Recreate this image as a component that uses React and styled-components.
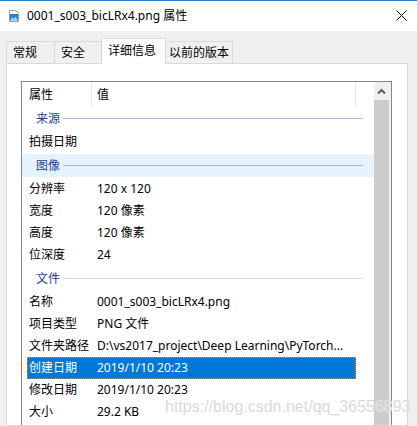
import React from "react";
import styled, { createGlobalStyle } from "styled-components";

const Global = createGlobalStyle`
  html, body { margin: 0; padding: 0; background: #f0f0f0; }
  body { font-family: "Noto Sans", "Noto Sans CJK SC", sans-serif; font-size: 12px; color: #000; }
`;

const Window = styled.div`
  position: relative;
  width: 417px;
  height: 426px;
  overflow: hidden;
  display: flex;
  flex-direction: column;
  background: #f0f0f0;
  font-family: "Noto Sans", "Noto Sans CJK SC", sans-serif;
  font-size: 12px;
  color: #000;
`;

const TitleBar = styled.div`
  box-sizing: border-box;
  height: 31px;
  flex-shrink: 0;
  border-top: 1px solid #1883d7;
  background: #fff;
  display: flex;
  align-items: center;
  padding: 0 10px 1px 9px;
`;

const TitleText = styled.span`
  margin-left: 8px;
  flex: 1;
  line-height: 16px;
  white-space: nowrap;
`;

const CloseBtn = styled.div`
  width: 11px;
  height: 11px;
  display: flex;
`;

const Body = styled.div`
  flex: 1;
  min-height: 0;
  display: flex;
  flex-direction: column;
  padding: 7px 9px 0 6px;
`;

const TabBar = styled.div`
  display: flex;
  align-items: flex-end;
  height: 26px;
  margin-bottom: -1px;
  position: relative;
  z-index: 1;
  flex-shrink: 0;
`;

const Tab = styled.div`
  box-sizing: border-box;
  width: ${(p) => p.$w}px;
  height: ${(p) => (p.$active ? 26 : 22)}px;
  margin-bottom: ${(p) => (p.$active ? 0 : 1)}px;
  margin-left: ${(p) => (p.$first ? 0 : -1)}px;
  border: 1px solid #d9d9d9;
  border-bottom: none;
  background: ${(p) => (p.$active ? "#fff" : "#f0f0f0")};
  padding-left: ${(p) => p.$pad}px;
  padding-top: ${(p) => (p.$active ? 4 : 3)}px;
  line-height: 16px;
  white-space: nowrap;
  position: relative;
  z-index: ${(p) => (p.$active ? 2 : 1)};
`;

const Panel = styled.div`
  flex: 1;
  min-height: 0;
  box-sizing: border-box;
  background: #fff;
  border: 1px solid #d9d9d9;
  padding: 17px 15px 0 14px;
  overflow: hidden;
`;

const ListBox = styled.div`
  display: flex;
  height: 380px;
  border: 1px solid #828790;
  background: #fff;
`;

const ListContent = styled.div`
  flex: 1;
  min-width: 0;
  display: flex;
  flex-direction: column;
`;

const ScrollTrack = styled.div`
  width: 17px;
  flex-shrink: 0;
  background: #f0f0f0;
  display: flex;
  flex-direction: column;
`;

const ScrollUp = styled.div`
  height: 17px;
  margin-top: 1px;
  margin-right: 2px;
  display: flex;
  align-items: center;
  justify-content: center;
  flex-shrink: 0;
`;

const Thumb = styled.div`
  flex: 1;
  background: #cdcdcd;
  margin-right: 2px;
`;

const HeaderRow = styled.div`
  display: flex;
  height: 24px;
  flex-shrink: 0;
`;

const HeadName = styled.div`
  box-sizing: border-box;
  width: 69px;
  padding-left: 7px;
  display: flex;
  align-items: center;
`;

const HeadValue = styled.div`
  box-sizing: border-box;
  width: 265px;
  border-left: 1px solid #e5e5e5;
  border-right: 1px solid #e5e5e5;
  padding-left: 5px;
  display: flex;
  align-items: center;
`;

const ItemRow = styled.div`
  box-sizing: border-box;
  display: flex;
  align-items: center;
  height: 22px;
  margin-left: 5px;
  width: 329px;
  flex-shrink: 0;
  background: ${(p) => (p.$sel ? "#0078d7" : "transparent")};
  color: ${(p) => (p.$sel ? "#fff" : "#000")};
  outline: ${(p) => (p.$sel ? "1px dotted #d98a3a" : "none")};
  outline-offset: -1px;
`;

const ItemName = styled.div`
  box-sizing: border-box;
  width: 64px;
  flex-shrink: 0;
  padding-left: 2px;
  white-space: nowrap;
  line-height: 16px;
`;

const ItemValue = styled.div`
  flex: 1;
  min-width: 0;
  padding: 0 6px;
  white-space: nowrap;
  overflow: hidden;
  text-overflow: ellipsis;
  line-height: 16px;
`;

const GroupRow = styled.div`
  height: 25px;
  box-sizing: border-box;
  padding: 1px 0;
  flex-shrink: 0;
  display: flex;
`;

const GroupInner = styled.div`
  flex: 1;
  display: flex;
  align-items: center;
  padding-left: 14px;
  background: ${(p) => (p.$hover ? "#e5f3ff" : "transparent")};
  color: #1e3f9e;
  line-height: 16px;
`;

const GroupLine = styled.div`
  flex: 1;
  height: 1px;
  margin: 0 11px 0 3px;
  background: ${(p) => p.$tone};
`;

const Watermark = styled.div`
  position: absolute;
  left: 165px;
  top: 399px;
  font-family: "Liberation Sans", Arial, sans-serif;
  font-size: 16px;
  line-height: 16px;
  color: #dadada;
  text-shadow: 0 0 1px rgba(255, 255, 255, 0.9);
  white-space: nowrap;
  pointer-events: none;
`;

const FileIcon = () => (
  <svg width="10" height="12" viewBox="0 0 10 12">
    <path d="M0.5 0.5 H6.5 L9.5 3.5 V11.5 H0.5 Z" fill="#fff" stroke="#9a9a9a" />
    <rect x="1" y="4" width="8" height="7" fill="#2b7fd4" />
    <path d="M1 11 L3.2 7.2 L4.8 9 L6.5 6.6 L9 11 Z" fill="#a9d4f5" />
  </svg>
);

const CloseIcon = () => (
  <svg width="11" height="11" viewBox="0 0 11 11">
    <path d="M0.5 0.5 L10.5 10.5 M10.5 0.5 L0.5 10.5" stroke="#000" strokeWidth="1" />
  </svg>
);

const UpIcon = () => (
  <svg width="9" height="7" viewBox="0 0 9 7">
    <polyline points="1,5.5 4.5,2 8,5.5" fill="none" stroke="#606060" strokeWidth="2" />
  </svg>
);

const tabs = [
  { label: "常规", w: 49, pad: 6 },
  { label: "安全", w: 48, pad: 6 },
  { label: "详细信息", w: 65, pad: 6, active: true },
  { label: "以前的版本", w: 68, pad: 3 },
];

const rows = [
  { g: "来源", tone: "#a9b7d8" },
  { n: "拍摄日期", v: "" },
  { g: "图像", tone: "#a9b7d8", hover: true },
  { n: "分辨率", v: "120 x 120" },
  { n: "宽度", v: "120 像素" },
  { n: "高度", v: "120 像素" },
  { n: "位深度", v: "24" },
  { g: "文件", tone: "#dcdfeb" },
  { n: "名称", v: "0001_s003_bicLRx4.png" },
  { n: "项目类型", v: "PNG 文件" },
  { n: "文件夹路径", v: "D:\\vs2017_project\\Deep Learning\\PyTorch..." },
  { n: "创建日期", v: "2019/1/10 20:23", sel: true },
  { n: "修改日期", v: "2019/1/10 20:23" },
  { n: "大小", v: "29.2 KB" },
];

export default function App() {
  return (
    <Window>
      <Global />
      <TitleBar>
        <FileIcon />
        <TitleText>0001_s003_bicLRx4.png 属性</TitleText>
        <CloseBtn>
          <CloseIcon />
        </CloseBtn>
      </TitleBar>
      <Body>
        <TabBar>
          {tabs.map((t, i) => (
            <Tab key={t.label} $w={t.w} $pad={t.pad} $active={t.active} $first={i === 0}>
              {t.label}
            </Tab>
          ))}
        </TabBar>
        <Panel>
          <ListBox>
            <ListContent>
              <HeaderRow>
                <HeadName>属性</HeadName>
                <HeadValue>值</HeadValue>
              </HeaderRow>
              {rows.map((r, i) =>
                r.g ? (
                  <GroupRow key={i}>
                    <GroupInner $hover={r.hover}>
                      {r.g}
                      <GroupLine $tone={r.tone} />
                    </GroupInner>
                  </GroupRow>
                ) : (
                  <ItemRow key={i} $sel={r.sel}>
                    <ItemName>{r.n}</ItemName>
                    <ItemValue>{r.v}</ItemValue>
                  </ItemRow>
                )
              )}
            </ListContent>
            <ScrollTrack>
              <ScrollUp>
                <UpIcon />
              </ScrollUp>
              <Thumb />
            </ScrollTrack>
          </ListBox>
        </Panel>
      </Body>
      <Watermark>https://blog.csdn.net/qq_36556893</Watermark>
    </Window>
  );
}
